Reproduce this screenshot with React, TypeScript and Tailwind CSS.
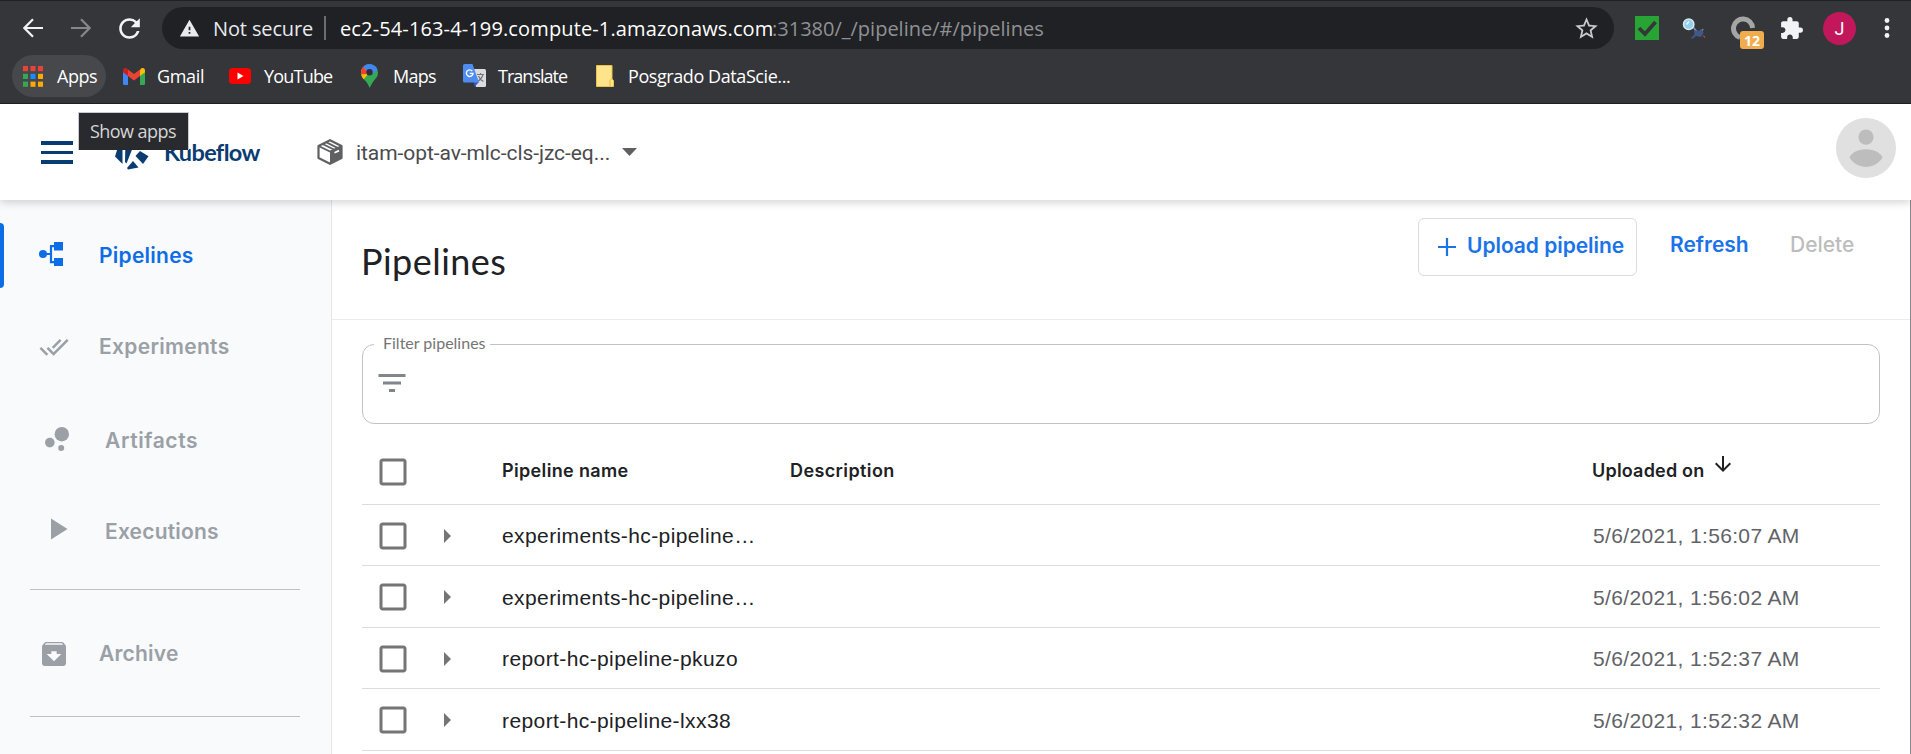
import type { ReactNode } from "react";
import {
  MdArchive,
  MdArrowDownward,
  MdBubbleChart,
  MdCheckBoxOutlineBlank,
  MdDoneAll,
  MdExtension,
  MdFilterList,
  MdPlayArrow,
  MdRefresh,
  MdStarBorder,
  MdWarning,
} from "react-icons/md";

function BackArrow({ className }: { className: string }) {
  return (
    <svg width="20" height="20" viewBox="0 0 20 20" fill="none" stroke="currentColor" strokeWidth="2.2" className={className}>
      <path d="M20 10H1.6M10 1.2 1.4 10l8.6 8.8" />
    </svg>
  );
}

function AppsIcon() {
  const colors = ["#ea4335", "#ea4335", "#ea4335", "#34a853", "#1a8cff", "#fbab00", "#34a853", "#fbab00", "#fbab00"];
  return (
    <svg width="20" height="21" viewBox="0 0 20 21">
      {colors.map((c, i) => (
        <rect key={i} x={(i % 3) * 7.5} y={Math.floor(i / 3) * 7.8} width="5" height="5.2" fill={c} />
      ))}
    </svg>
  );
}

function GmailIcon() {
  return (
    <svg width="22" height="17" viewBox="0 0 22 17">
      <path d="M0 3.5 5 7v10H1.5A1.5 1.5 0 0 1 0 15.5z" fill="#4285f4" />
      <path d="M22 3.5 17 7v10h3.5a1.5 1.5 0 0 0 1.5-1.5z" fill="#34a853" />
      <path d="M17 2.2V8l5-3.8V2.3C22 .3 19.7-.7 18 .5z" fill="#fbbc04" />
      <path d="M5 8V1.500l6 4.500 6-4.500V8l-6 4.500z" fill="#ea4335" />
      <path d="M0 2.300v1.900L5 8V1.500L4 .5C2.300-.7 0 .3 0 2.300z" fill="#c5221f" />
    </svg>
  );
}

function YouTubeIcon() {
  return (
    <svg width="22" height="16" viewBox="0 0 22 16">
      <rect width="22" height="16" rx="3.5" fill="#f00" />
      <path d="M8.5 4.6v6.8L14.5 8z" fill="#fff" />
    </svg>
  );
}

function MapsIcon() {
  return (
    <svg width="17" height="24" viewBox="0 0 17 24">
      <path d="M8.500 0a8.400 8.400 0 0 1 8.500 8.400c0 4.200-2.500 6-4.300 8.600C10.500 20 9.600 22 8.700 24 7.800 22 7 20 4.500 17 2.500 14.500 0 12.500 0 8.400A8.400 8.400 0 0 1 8.500 0z" fill="#34a853" />
      <path d="M0 8.400c0 3 1.200 5 2.700 6.900L11.800 5 6 2 .6 5.500z" fill="#fbbc04" />
      <path d="M2 3 5.500 10 .3 10.500A8.200 8.200 0 0 1 2 3z" fill="#ea4335" />
      <path d="M2 3a8.500 8.500 0 0 1 14.400 2.600L12 10 6.500 7.500z" fill="#4285f4" />
      <path d="M2 3 6.500 7.500 5 9.500.4 6z" fill="#ea4335" />
      <circle cx="8.500" cy="8.300" r="3.200" fill="#2f3034" />
    </svg>
  );
}

function TranslateIcon() {
  return (
    <svg width="23" height="24" viewBox="0 0 23 24">
      <path d="M8 5h13.500a1.500 1.500 0 0 1 1.500 1.500v15a1.500 1.500 0 0 1-1.500 1.500H13z" fill="#dcdcdc" />
      <path d="M14 10.500h7M17.500 9v1.500M20 10.500c-.8 3-3 5.500-5.500 7M15.500 12c1 2.500 3 4.500 5 5.500" stroke="#6b7a84" strokeWidth="1.200" fill="none" />
      <path d="M11 18h5l-4.500 5z" fill="#3a5bc7" />
      <path d="M1.500 0h8L16 18.500H1.500A1.500 1.500 0 0 1 0 17V1.500A1.500 1.500 0 0 1 1.500 0z" fill="#4f8cf2" />
      <path d="M9.300 7.100A3.300 3.300 0 1 0 10 9.400H6.800" stroke="#fff" strokeWidth="1.400" fill="none" />
    </svg>
  );
}

function FolderIcon() {
  return (
    <svg width="18" height="22" viewBox="0 0 18 22">
      <path d="M.5.500h15.500v13.500l1.500 1.500v6H.500z" fill="#ffe48c" stroke="#e8c547" />
      <path d="M14 21v-5.500l1.500-1.500" stroke="#e0b93a" fill="none" />
    </svg>
  );
}

function Bookmark({ icon, label, className }: { icon: ReactNode; label: string; className: string }) {
  return (
    <div className={`flex h-[42px] shrink-0 items-center whitespace-nowrap ${className}`}>
      {icon}
      <span>{label}</span>
    </div>
  );
}

function DetectiveIcon() {
  return (
    <svg width="24" height="24" viewBox="0 0 24 24">
      <path d="M11.500 11.500 16 17M21 13l-2 4" stroke="#7d93b8" strokeWidth="1.500" />
      <path d="m12 14 4 1 4-2 1.500 4-2.500 4-5-1-3 2.500h-2.500l4-4z" fill="#40588a" />
      <path d="m21 19 2.500 2-1.500 1z" fill="#d2492a" />
      <circle cx="6.700" cy="8.300" r="5.200" fill="#8fd0f0" stroke="#dbe6ee" strokeWidth="1.500" />
      <path d="M4.500 8.500 7 5.500" stroke="#e8f8ff" strokeWidth="1.500" />
    </svg>
  );
}

function BrowserChrome() {
  return (
    <div className="h-[104px] shrink-0 border-t border-b border-t-[#202124] border-b-[#202023] bg-[#35363a] font-['Open_Sans','Noto_Sans',sans-serif] text-white">
      <div className="flex h-[54px] items-center">
        <BackArrow className="ml-[23px] -mt-px text-[#f1f3f4]" />
        <BackArrow className="ml-[28px] -mt-px rotate-180 text-[#86878a]" />
        <MdRefresh className="ml-[23px] size-[31px] text-[#f1f3f4]" />
        <div className="ml-[17px] flex h-[42px] w-[1452px] items-center rounded-full bg-[#202124] text-[20px] whitespace-nowrap">
          <MdWarning className="ml-[17px] size-[21px] text-[#e8eaed]" />
          <span className="ml-[13px] w-[111px] pt-[2px] tracking-[-0.13px] text-[#e8eaed]">Not secure</span>
          <span className="h-[24px] w-[2px] bg-[#6d6e71]" />
          <span className="ml-[14px] w-[432px] pt-[2px] tracking-[0.13px]">ec2-54-163-4-199.compute-1.amazonaws.com</span>
          <span className="pt-[2px] text-[#8f9195]">:31380/_/pipeline/#/pipelines</span>
          <MdStarBorder className="mr-[14px] ml-auto size-[27px] text-[#c8c9cc]" />
        </div>
        <svg width="24" height="24" viewBox="0 0 24 24" className="ml-[21px]">
          <path d="M0 0h24v24H0z" fill="#28a434" />
          <path d="m4 12 6 6L20.500 6" stroke="#35363a" strokeWidth="3.800" fill="none" />
        </svg>
        <div className="ml-[23px]">
          <DetectiveIcon />
        </div>
        <div className="relative ml-[25px] size-[24px]">
          <svg width="24" height="24" viewBox="0 0 24 24">
            <path d="M9 21.500A9.500 9.500 0 1 1 21.500 12" stroke="#a5a5a5" strokeWidth="5" fill="none" />
          </svg>
          <span className="absolute top-[15px] left-[9px] flex h-[18px] w-[24px] items-center justify-center rounded-[3px] bg-[#f0ad4e] text-[14px] font-bold">
            12
          </span>
        </div>
        <MdExtension className="ml-[24px] size-[25px] text-[#f1f3f4]" />
        <div className="ml-[19px] flex size-[33px] items-center justify-center rounded-full bg-[#c2185b] font-['Roboto',sans-serif] text-[18px]">J</div>
        <svg width="6" height="20" viewBox="0 0 6 20" className="ml-[28px]" fill="#f1f3f4">
          <circle cx="3" cy="2.500" r="2.400" />
          <circle cx="3" cy="10" r="2.400" />
          <circle cx="3" cy="17.500" r="2.400" />
        </svg>
      </div>
      <div className="flex h-[42px] items-center text-[18px]">
        <Bookmark icon={<AppsIcon />} label="Apps" className="ml-[12px] w-[94px] gap-[14px] rounded-full bg-[#47484c] pl-[11px] tracking-[-0.47px]" />
        <Bookmark icon={<GmailIcon />} label="Gmail" className="ml-[17px] w-[106px] gap-[12px] tracking-[-0.32px]" />
        <Bookmark icon={<YouTubeIcon />} label="YouTube" className="w-[132px] gap-[13px] tracking-[-0.8px]" />
        <Bookmark icon={<MapsIcon />} label="Maps" className="w-[102px] gap-[15px] tracking-[-0.7px]" />
        <Bookmark icon={<TranslateIcon />} label="Translate" className="w-[133px] gap-[12px] tracking-[-0.98px]" />
        <Bookmark icon={<FolderIcon />} label="Posgrado DataScie..." className="gap-[14px] tracking-[-0.42px]" />
      </div>
    </div>
  );
}

function KubeflowMark() {
  return (
    <svg width="34" height="36" viewBox="0 0 34 36" fill="#0a3c72">
      <path d="M7.500 5v25L0 22.500 4 10z" />
      <path d="M10.500 3H22L11.500 29.500 10 28z" />
      <path d="m25 17 8.500 5.300-5.500 7.700L20.500 22z" />
      <path d="m18 27 5.500 6.500-10.500 2-1-1.500z" />
    </svg>
  );
}

function PackageIcon() {
  return (
    <svg width="26" height="26" viewBox="0 0 26 26">
      <path d="M13 1.200 24.500 7v12L13 24.800 1.500 19V7z" fill="#fff" stroke="#5f6062" strokeWidth="2.200" strokeLinejoin="round" />
      <path d="M13 12.500 24.500 7v12L13 24.800z" fill="#5f6062" />
      <path d="M1.500 7 13 12.500 24.500 7M5.500 5 17 10.500M9 3.200 20.500 8.800" fill="none" stroke="#5f6062" strokeWidth="1.900" />
      <path d="m17.500 13.800 4.500-2.200" stroke="#fff" strokeWidth="1.800" />
    </svg>
  );
}

function Header() {
  return (
    <header className="relative z-10 flex h-[96px] shrink-0 items-start bg-white shadow-[0_3px_8px_rgba(0,0,0,0.16)]">
      <div className="mt-[37px] ml-[41px] flex w-[32px] flex-col gap-[5.5px]">
        <span className="h-[4px] bg-[#083c72]" />
        <span className="h-[3.5px] bg-[#083c72]" />
        <span className="h-[4px] bg-[#083c72]" />
      </div>
      <div className="mt-[30px] ml-[42px] flex w-[202px] items-start">
        <KubeflowMark />
        <span className="ml-[15px] font-['Lato',sans-serif] text-[23.5px] leading-[36px] font-bold tracking-[-0.65px] text-[#0a3c72]">Kubeflow</span>
      </div>
      <div className="mt-[35px] flex h-[26px] items-center">
        <PackageIcon />
        <span className="mt-[3px] ml-[13px] w-[253px] font-['Roboto',sans-serif] text-[21px] tracking-[-0.07px] whitespace-nowrap text-[#4a4b4d]">itam-opt-av-mlc-cls-jzc-eq...</span>
        <svg width="15" height="8" viewBox="0 0 15 8" className="ml-[13px]" fill="#5f6062">
          <path d="M0 0h15L7.500 8z" />
        </svg>
      </div>
      <svg width="60" height="60" viewBox="0 0 60 60" className="mt-[14px] mr-[15px] ml-auto">
        <circle cx="30" cy="30" r="30" fill="#e0e0e0" />
        <circle cx="30" cy="19.200" r="7.600" fill="#bdbdbd" />
        <path d="M13.500 39.500C18 28.500 42 28.500 46.500 39.500 39 52 21 52 13.500 39.500z" fill="#bdbdbd" />
      </svg>
      <div className="absolute top-[8px] left-[78px] flex h-[38px] w-[111px] items-center border border-b-0 border-[#c9cbce] bg-[#292a2d] pl-[11px] font-['Open_Sans',sans-serif] text-[18px] tracking-[-0.55px] whitespace-nowrap text-[#d5d6d8]">
        Show apps
      </div>
    </header>
  );
}

function PipelineGlyph() {
  return (
    <svg width="24" height="24" viewBox="0 0 24 24" fill="#0d6de7" className="-mt-[3px]">
      <circle cx="4" cy="12" r="4" />
      <path d="M15 0h9v8.500h-9zM15 16h9v8h-9z" />
      <path d="M4 12h8M16 4.200h-4v16h4" fill="none" stroke="#0d6de7" strokeWidth="2.200" />
    </svg>
  );
}

function NavItem({ icon, label, className, labelClass }: { icon: ReactNode; label: string; className: string; labelClass: string }) {
  return (
    <div className={`flex items-center ${className}`}>
      {icon}
      <span className={labelClass}>{label}</span>
    </div>
  );
}

function Sidebar() {
  return (
    <nav className="flex w-[332px] shrink-0 flex-col border-r border-[#e4e6e8] bg-[#f8fafc] pt-[10px] font-['Inter',sans-serif] text-[21px] font-semibold text-[#9aa0a6]">
      <div className="flex h-[91px] items-center text-[#0d6de7]">
        <span className="h-[65px] w-[4px] rounded-r-[4px] bg-[#0d6de7]" />
        <NavItem icon={<PipelineGlyph />} label="Pipelines" className="ml-[35px]" labelClass="ml-[36px] tracking-[0.25px]" />
      </div>
      <NavItem icon={<MdDoneAll className="size-[30px]" />} label="Experiments" className="ml-[39px] h-[91px]" labelClass="ml-[30px] tracking-[0.3px]" />
      <NavItem icon={<MdBubbleChart className="-mt-[4px] size-[36px]" />} label="Artifacts" className="mt-[3px] ml-[39px] h-[91px]" labelClass="ml-[30px] tracking-[0.6px]" />
      <NavItem icon={<MdPlayArrow className="-mt-[6px] size-[36px]" />} label="Executions" className="ml-[39px] h-[91px]" labelClass="ml-[30px] tracking-[0.2px]" />
      <div className="mr-[31px] ml-[30px] mt-[12px] h-px shrink-0 bg-[#bdc1c6]" />
      <NavItem icon={<MdArchive className="size-[32px]" />} label="Archive" className="ml-[38px] h-[126px] shrink-0 pt-[2px]" labelClass="ml-[29px] tracking-[0.2px]" />
      <div className="mr-[31px] ml-[30px] h-px shrink-0 bg-[#bdc1c6]" />
    </nav>
  );
}

const rows = [
  { name: "experiments-hc-pipeline…", date: "5/6/2021, 1:56:07 AM" },
  { name: "experiments-hc-pipeline…", date: "5/6/2021, 1:56:02 AM" },
  { name: "report-hc-pipeline-pkuzo", date: "5/6/2021, 1:52:37 AM" },
  { name: "report-hc-pipeline-lxx38", date: "5/6/2021, 1:52:32 AM" },
];

function Main() {
  return (
    <main className="flex flex-1 flex-col border-r border-[#85878a] bg-white">
      <div className="flex h-[120px] shrink-0 items-start border-b border-[#ececec] text-[#1a73e8]">
        <h1 className="mt-[37px] ml-[29px] font-['Lato',sans-serif] text-[36px] leading-[48px] tracking-[0.47px] text-[#202124]">Pipelines</h1>
        <div className="mt-[18px] mr-[55px] ml-auto flex items-start font-['Inter',sans-serif] text-[21px] leading-[26px] font-semibold">
          <button className="flex h-[58px] w-[219px] rounded-[6px] border border-[#dadce0] pt-[14px] pl-[19px] whitespace-nowrap">
            <svg width="18" height="18" viewBox="0 0 18 18" className="mt-[5px]" stroke="currentColor" strokeWidth="2.200">
              <path d="M9 0v18M0 9h18" />
            </svg>
            <span className="ml-[11px] tracking-[-0.05px]">Upload pipeline</span>
          </button>
          <button className="mt-[14px] ml-[33px] w-[120px] text-left">Refresh</button>
          <button className="mt-[14px] w-[65px] text-left font-medium text-[#bdbdbd]">Delete</button>
        </div>
      </div>
      <fieldset className="mt-[14px] mr-[30px] ml-[30px] h-[90px] shrink-0 rounded-[12px] border border-[#c2c2c2] pl-[11px]">
        <legend className="pr-[4px] pb-[2px] pl-[9px] font-['Lato',sans-serif] text-[16px] leading-[18px] text-[#757575]">Filter pipelines</legend>
        <MdFilterList className="mt-[11px] size-[36px] text-[#80868b]" />
      </fieldset>
      <div className="mx-[30px] flex flex-col">
        <div className="flex h-[81px] items-start border-b border-[#dcdcdc] font-['Inter',sans-serif] text-[18px] leading-[24px] font-semibold text-[#202124]">
          <MdCheckBoxOutlineBlank className="mt-[30px] ml-[13px] size-[36px] text-[#757575]" />
          <span className="mt-[35px] ml-[91px] w-[288px] tracking-[0.35px]">Pipeline name</span>
          <span className="mt-[35px] tracking-[0.4px]">Description</span>
          <span className="mt-[35px] ml-auto flex w-[288px] tracking-[0.2px]">
            Uploaded on
            <MdArrowDownward className="ml-[7px] -mt-[7px] size-[24px]" />
          </span>
        </div>
        {rows.map((r, i) => (
          <div key={i} className="flex items-center border-b border-[#dcdcdc] pt-px font-['Liberation_Sans',sans-serif] text-[21px] odd:h-[62px] even:h-[61px]">
            <MdCheckBoxOutlineBlank className="ml-[13px] size-[36px] text-[#757575]" />
            <svg width="7" height="14" viewBox="0 0 7 14" className="ml-[33px]" fill="#757575">
              <path d="M0 0v14l7-7z" />
            </svg>
            <span className="mt-px ml-[51px] tracking-[0.4px] text-[#202124]">{r.name}</span>
            <span className="mt-px ml-auto w-[287px] tracking-[0.35px] text-[#5f6368]">{r.date}</span>
          </div>
        ))}
      </div>
    </main>
  );
}

export default function App() {
  return (
    <div className="flex h-[754px] w-[1911px] flex-col overflow-hidden bg-white">
      <BrowserChrome />
      <Header />
      <div className="flex flex-1 overflow-hidden">
        <Sidebar />
        <Main />
      </div>
    </div>
  );
}
